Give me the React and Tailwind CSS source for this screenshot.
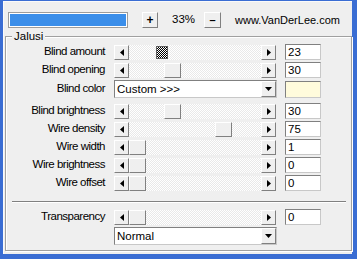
import React from 'react';

const raised = 'bg-[#efefef] border border-t-white border-l-white border-r-[#808080] border-b-[#808080]';
const sunken = 'bg-white border border-t-[#808080] border-l-[#808080] border-r-[#c8c8c8] border-b-[#c8c8c8]';

const Arrow = ({ dir }) => (
    <div className={`w-[15px] h-[15px] flex items-center justify-center ${raised}`}>
        <svg width="4" height="7" viewBox="0 0 4 7">
            {dir === 'left'
                ? <polygon points="4,0 0,3.5 4,7" fill="#000" />
                : <polygon points="0,0 4,3.5 0,7" fill="#000" />}
        </svg>
    </div>
);

const DownBtn = () => (
    <div className={`w-[15px] h-full flex items-center justify-center ${raised}`}>
        <svg width="7" height="4" viewBox="0 0 7 4">
            <polygon points="0,0 7,0 3.5,4" fill="#000" />
        </svg>
    </div>
);

// slider with the thumb offset inside the track
const Slider = ({ pos, focus }) => (
    <div className="flex h-[15px] w-[162px]">
        <Arrow dir="left" />
        <div className="flex-1 flex bg-[#f4f4f4] bg-[image:repeating-conic-gradient(#ffffff_0_25%,#e9e9e9_0_50%)] bg-[length:2px_2px]">
            {focus ? (
                <div
                    style={{ marginLeft: pos }}
                    className="w-[12px] my-[1px] border border-[#606060] bg-[image:repeating-conic-gradient(#000000_0_25%,#ffffff_0_50%)] bg-[length:2px_2px]"
                />
            ) : (
                <div style={{ marginLeft: pos }} className={`w-[17px] ${raised}`} />
            )}
        </div>
        <Arrow dir="right" />
    </div>
);

const Value = ({ v }) => (
    <div className={`ml-[9px] w-[36px] h-[16px] pl-[2px] leading-[14px] text-[11.5px] ${sunken}`}>{v}</div>
);

const Label = ({ text }) => (
    <div className="w-[99px] text-right text-[11.5px] tracking-[-0.5px] whitespace-nowrap">{text}</div>
);

const rows = [
    { label: 'Blind amount', value: '23', pos: 27, focus: true },
    { label: 'Blind opening', value: '30', pos: 35 },
    { color: true },
    { label: 'Blind brightness', value: '30', pos: 35 },
    { label: 'Wire density', value: '75', pos: 86 },
    { label: 'Wire width', value: '1', pos: 0 },
    { label: 'Wire brightness', value: '0', pos: 0 },
    { label: 'Wire offset', value: '0', pos: 0 },
];

export default function App() {
    return (
        <div className="w-[357px] h-[259px] bg-[#3a6dd3] pt-[1px] pl-[3px] pr-[5px] pb-[5px] font-['Liberation_Sans',Arial,sans-serif] text-[11px] text-black">
            <div className="w-[349px] h-[253px] bg-[#efefef] border-l border-t border-[#fafafa] flex flex-col">
                {/* top bar */}
                <div className="flex items-center h-[16px] mt-[10px] ml-[4px]">
                    <div className="w-[120px] h-[16px] p-[1px] border border-[#9c9c9c] bg-white">
                        <div className="w-full h-full bg-[#3a8eea]" />
                    </div>
                    <div className={`ml-[14px] w-[16px] h-[16px] flex items-center justify-center font-bold text-[12px] leading-none ${raised}`}>+</div>
                    <div className="ml-[14px] w-[20px] text-[11.5px]">33%</div>
                    <div className={`ml-[12px] w-[17px] h-[16px] flex items-center justify-center font-bold leading-none ${raised}`}>–</div>
                    <div className="ml-[14px]">www.VanDerLee.com</div>
                </div>

                {/* Jalusi group */}
                <div className="relative ml-[1px] mt-[8px] w-[347px] h-[215px] border border-[#a0a0a0] shadow-[inset_1px_1px_0_#ffffff,1px_1px_0_#ffffff] pt-[6px] flex flex-col">
                    <span className="absolute top-[-7px] left-[6px] px-[2px] leading-[12px] text-[11.5px] bg-[#efefef]">Jalusi</span>

                    {rows.map((r, i) =>
                        r.color ? (
                            <div key={i} className="flex items-center h-[23px] pb-[3px]">
                                <Label text="Blind color" />
                                <div className={`ml-[9px] w-[163px] h-[18px] flex ${sunken}`}>
                                    <div className="flex-1 pl-[2px] leading-[16px] text-[11.5px]">Custom &gt;&gt;&gt;</div>
                                    <DownBtn />
                                </div>
                                <div className={`ml-[8px] w-[36px] h-[17px] !bg-[#fffbdc] ${sunken}`} />
                            </div>
                        ) : (
                            <div key={i} className="flex items-center h-[18px]">
                                <Label text={r.label} />
                                <div className="ml-[9px]">
                                    <Slider pos={r.pos} focus={r.focus} />
                                </div>
                                <Value v={r.value} />
                            </div>
                        )
                    )}

                    <div className="mt-[9px] ml-[6px] mr-[5px] h-[2px] border-t border-[#808080] border-b border-b-white" />

                    <div className="flex items-center h-[18px] mt-[5px]">
                        <Label text="Transparency" />
                        <div className="ml-[9px]">
                            <Slider pos={0} />
                        </div>
                        <Value v="0" />
                    </div>

                    <div className={`mt-[1px] ml-[108px] w-[163px] h-[18px] flex ${sunken}`}>
                        <div className="flex-1 pl-[2px] leading-[16px] text-[11.5px]">Normal</div>
                        <DownBtn />
                    </div>
                </div>
            </div>
        </div>
    );
}
